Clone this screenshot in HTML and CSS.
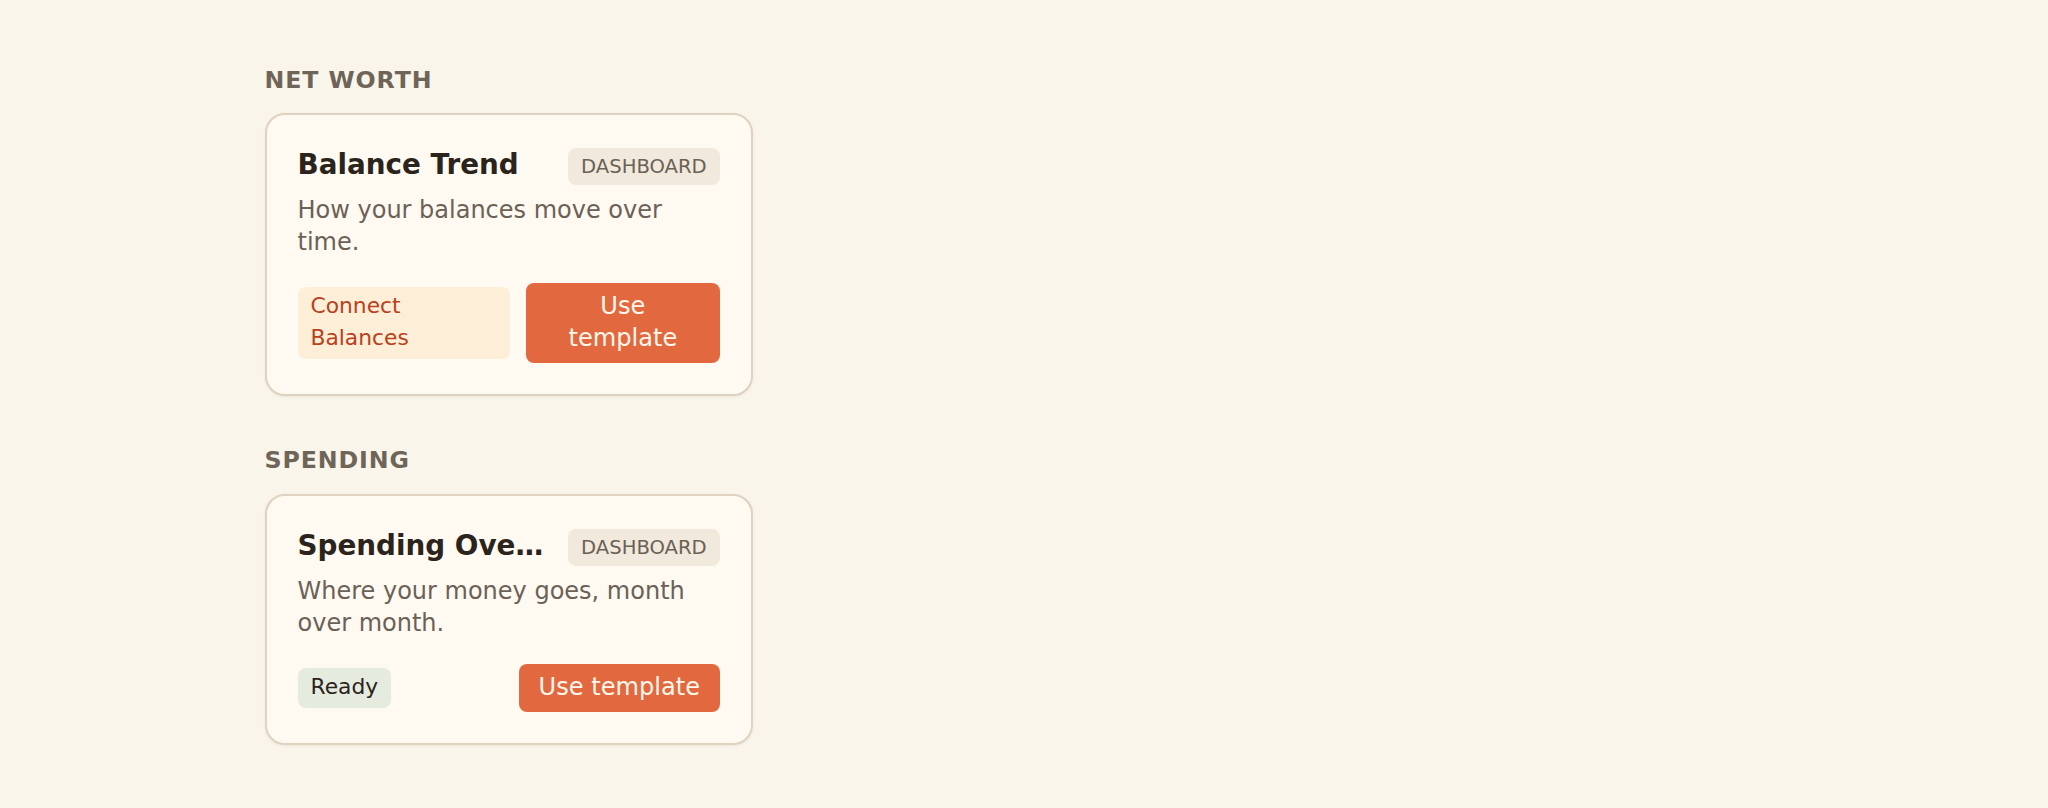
FILE: index.html
```html
<!DOCTYPE html>
<html lang="en">
<head>
<meta charset="utf-8">
<title>Templates</title>
<link rel="stylesheet" href="styles.css">
</head>
<body>
<main class="page">
  <section class="group">
    <h2 class="group-label">NET WORTH</h2>
    <article class="card">
      <div class="card-head">
        <h3 class="card-title">Balance Trend</h3>
        <span class="badge">DASHBOARD</span>
      </div>
      <p class="card-desc">How your balances move over time.</p>
      <div class="card-actions">
        <span class="chip chip-warn">Connect Balances</span>
        <button class="btn" type="button">Use template</button>
      </div>
    </article>
  </section>
  <section class="group">
    <h2 class="group-label">SPENDING</h2>
    <article class="card">
      <div class="card-head">
        <h3 class="card-title">Spending Overview</h3>
        <span class="badge">DASHBOARD</span>
      </div>
      <p class="card-desc">Where your money goes, month over month.</p>
      <div class="card-actions">
        <span class="chip chip-ok">Ready</span>
        <button class="btn" type="button">Use template</button>
      </div>
    </article>
  </section>
</main>
</body>
</html>
```

FILE: styles.css
```css
* {
  box-sizing: border-box;
}

html, body {
  margin: 0;
  padding: 0;
}

body {
  background: #f9f5eb;
  font-family: "DejaVu Sans", "Noto Sans", sans-serif;
  color: #2b241c;
}

.page {
  padding: 64.7px 0 40px 264.5px;
  display: flex;
  flex-direction: column;
  gap: 49px;
}

.group {
  display: flex;
  flex-direction: column;
  width: 488px;
}

.group-label {
  margin: 0 0 17.8px 0;
  font-size: 23.7px;
  line-height: 30.8px;
  font-weight: bold;
  letter-spacing: 0.9px;
  color: #6e6558;
}

.card {
  width: 488px;
  background: #fffaf1;
  border: 2px solid #dfd2bf;
  border-radius: 20px;
  padding: 33px 31px 31px 31px;
  box-shadow: 0 1px 3px rgba(90, 60, 30, 0.07);
}

.card-head {
  display: flex;
  align-items: flex-start;
  justify-content: space-between;
  gap: 20px;
}

.card-title {
  margin: 0;
  flex: 1 1 auto;
  min-width: 0;
  font-size: 27.8px;
  line-height: 34px;
  font-weight: bold;
  color: #2b241c;
  white-space: nowrap;
  overflow: hidden;
  text-overflow: ellipsis;
}

.badge {
  flex: 0 0 auto;
  background: #f1e9dc;
  color: #6b6156;
  font-size: 19.6px;
  line-height: 27px;
  padding: 5px 12.8px;
  border-radius: 8px;
}

.card-desc {
  margin: 8.7px 0 25px 0;
  font-size: 24px;
  line-height: 32px;
  color: #6b6156;
}

.card-actions {
  display: flex;
  align-items: center;
  justify-content: space-between;
  gap: 16px;
}

.chip {
  font-size: 21.8px;
  line-height: 32px;
  padding: 3px 13px 5.5px 13px;
  border-radius: 8px;
}

.chip-warn {
  background: #fdefd7;
  color: #b9411c;
}

.chip-ok {
  background: #e6ebdf;
  color: #2b241c;
}

.btn {
  font-family: inherit;
  font-size: 24.1px;
  line-height: 31.7px;
  padding: 8.5px 19.5px;
  border: none;
  border-radius: 8px;
  background: #e2693f;
  color: #fff7ec;
  text-align: center;
  cursor: pointer;
}
```
